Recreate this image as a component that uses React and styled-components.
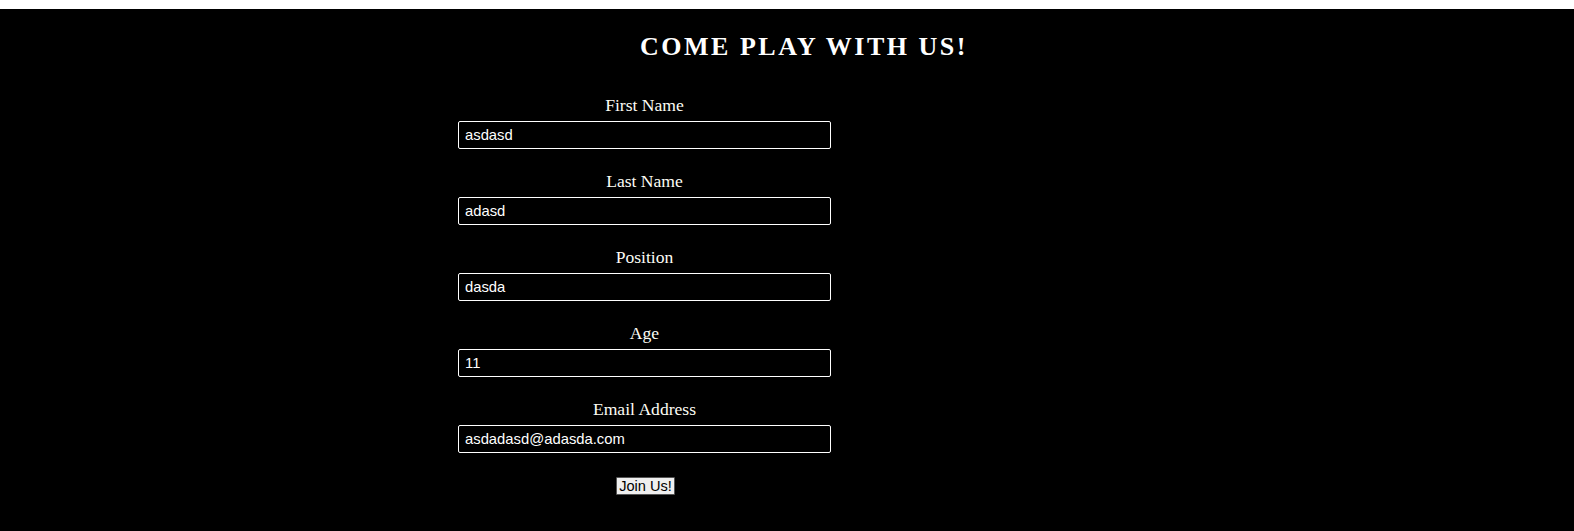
import React from "react";
import styled, { createGlobalStyle } from "styled-components";

const GlobalStyle = createGlobalStyle`
    html, body {
        margin: 0;
        padding: 0;
        background: #fff;
    }
    * {
        box-sizing: border-box;
    }
`;

const Page = styled.div`
    margin-top: 9px;
    min-height: 522px;
    background-color: #000;
    color: #fff;
    font-family: "Liberation Serif", "Times New Roman", serif;
    padding: 23px 0 30px 0;
`;

const Title = styled.h1`
    margin: 0;
    padding-left: 34px;
    text-align: center;
    font-size: 26px;
    line-height: 30px;
    font-weight: 700;
    letter-spacing: 2.5px;
`;

const Form = styled.form`
    width: 373px;
    margin: 33px 0 0 458px;
    display: flex;
    flex-direction: column;
    gap: 22px;
`;

const Field = styled.div`
    display: flex;
    flex-direction: column;
    gap: 6px;
`;

const Label = styled.label`
    text-align: center;
    font-size: 17.6px;
    line-height: 20px;
    color: #fdfdf5;
`;

const Input = styled.input`
    width: 100%;
    height: 28px;
    border: 1px solid #fff;
    border-radius: 2px;
    background: #000;
    color: #fff;
    padding: 0 6px;
    font-family: "Liberation Sans", Arial, sans-serif;
    font-size: 14.8px;
    outline: none;
`;

const Submit = styled.button`
    align-self: center;
    margin: 2px 0 0 2px;
    height: 18px;
    padding: 0 2px;
    border: 1px solid #555;
    border-radius: 1px;
    background: #efefef;
    color: #000;
    font-family: "Liberation Sans", Arial, sans-serif;
    font-size: 14.6px;
    line-height: 16px;
`;

const fields = [
    { id: "first", label: "First Name", value: "asdasd" },
    { id: "last", label: "Last Name", value: "adasd" },
    { id: "position", label: "Position", value: "dasda" },
    { id: "age", label: "Age", value: "11" },
    { id: "email", label: "Email Address", value: "asdadasd@adasda.com" },
];

const App = () => {
    return (
        <>
            <GlobalStyle />
            <Page>
                <Title>COME PLAY WITH US!</Title>
                <Form onSubmit={e => e.preventDefault()}>
                    {fields.map(f => (
                        <Field key={f.id}>
                            <Label htmlFor={f.id}>{f.label}</Label>
                            <Input id={f.id} defaultValue={f.value} />
                        </Field>
                    ))}
                    <Submit type="submit">Join Us!</Submit>
                </Form>
            </Page>
        </>
    );
};

export default App;
